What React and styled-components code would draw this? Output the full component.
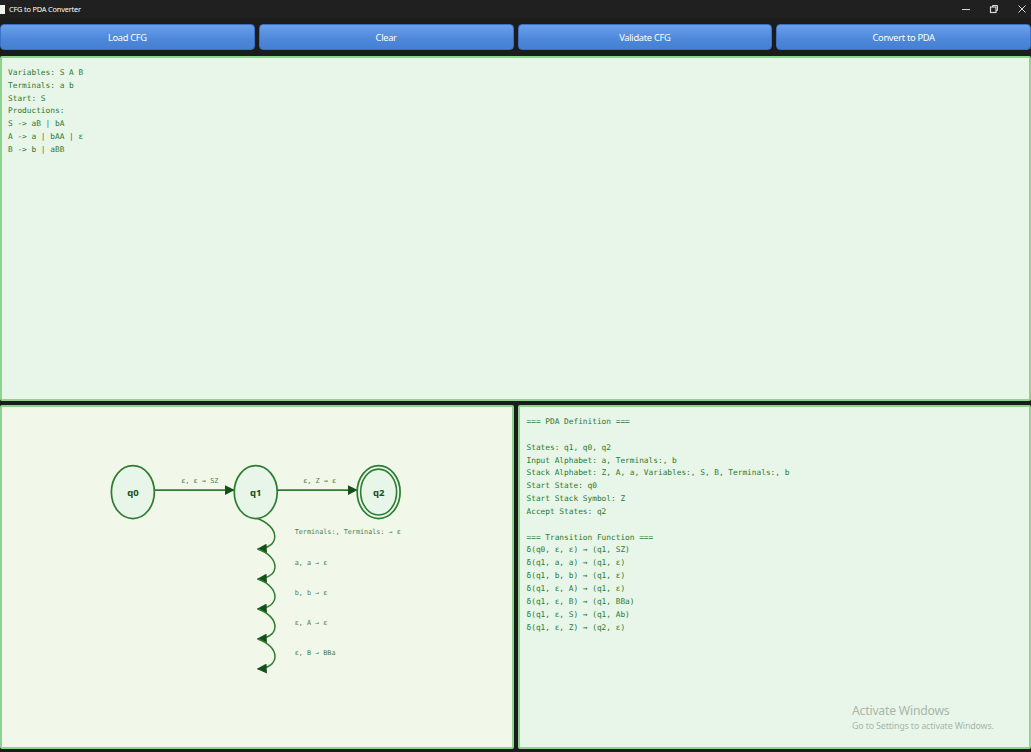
import React from "react";
import styled, { createGlobalStyle } from "styled-components";

const Global = createGlobalStyle`
  html, body { margin: 0; padding: 0; background: #1c1c1c; }
  #root { width: 1031px; height: 752px; overflow: hidden; }
  * { box-sizing: border-box; }
`;

const Window = styled.div`
  position: relative;
  width: 1031px;
  height: 752px;
  display: flex;
  flex-direction: column;
  background: #1c1c1c;
  font-family: "Noto Sans", "Open Sans", sans-serif;
`;

const TitleBar = styled.div`
  height: 18px;
  display: flex;
  align-items: center;
  background: #202020;
  color: #ffffff;
  font-size: 7.4px;
`;

const AppIcon = styled.span`
  width: 5px;
  height: 9px;
  background: #f2f2f2;
  margin-right: 4px;
`;

const TitleText = styled.span`
  flex: 1;
  letter-spacing: -0.2px;
`;

const WinControls = styled.div`
  display: flex;
  align-items: center;
  gap: 10px;
  height: 100%;
`;

const WinBtn = styled.div`
  width: 18px;
  height: 18px;
  display: flex;
  align-items: center;
  justify-content: center;
`;

const Toolbar = styled.div`
  display: grid;
  grid-template-columns: repeat(4, 1fr);
  gap: 4px;
  padding: 6px 0 6px 0;
`;

const Button = styled.button`
  height: 26px;
  border: 1px solid #3c70c0;
  border-radius: 4px;
  background: linear-gradient(#6aa1ec, #4d87da 60%, #4580d3);
  color: #ffffff;
  font-family: "Noto Sans", "Open Sans", sans-serif;
  font-size: 9.3px;
  letter-spacing: -0.3px;
  padding: 0;
`;

const mono = `"DejaVu Sans Mono", "Liberation Mono", monospace`;

const InputArea = styled.div`
  height: 345px;
  background: #e8f5e9;
  border: 2px solid #8ed38e;
  border-radius: 2px;
  padding: 9px 6px;
  font-family: ${mono};
  font-size: 7.8px;
  line-height: 12.8px;
  color: #2a7a2f;
  white-space: pre;
`;

const Bottom = styled.div`
  display: grid;
  grid-template-columns: 1fr 1fr;
  gap: 4px;
  margin-top: 4px;
  height: 344px;
`;

const Panel = styled.div`
  background: ${(p) => p.$bg};
  border: 2px solid #8ed38e;
  border-radius: 2px;
  overflow: hidden;
`;

const OutputText = styled.div`
  padding: 9px 7px;
  font-family: ${mono};
  font-size: 7.8px;
  line-height: 12.85px;
  color: #2a7a2f;
  white-space: pre;
`;

const Diagram = styled.svg`
  display: block;
  width: 100%;
  height: 100%;
`;

const Watermark = styled.div`
  position: absolute;
  left: 852px;
  top: 702px;
  color: #a9b5aa;
  font-family: "Noto Sans", "Open Sans", sans-serif;
  pointer-events: none;
`;

const WmTitle = styled.div`
  font-size: 12.2px;
  line-height: 17px;
  letter-spacing: -0.2px;
`;

const WmSub = styled.div`
  font-size: 8.9px;
  line-height: 14px;
  letter-spacing: -0.15px;
`;

const cfg = `Variables: S A B
Terminals: a b
Start: S
Productions:
S -> aB | bA
A -> a | bAA | ε
B -> b | aBB`;

const pda = `=== PDA Definition ===

States: q1, q0, q2
Input Alphabet: a, Terminals:, b
Stack Alphabet: Z, A, a, Variables:, S, B, Terminals:, b
Start State: q0
Start Stack Symbol: Z
Accept States: q2

=== Transition Function ===
δ(q0, ε, ε) → (q1, SZ)
δ(q1, a, a) → (q1, ε)
δ(q1, b, b) → (q1, ε)
δ(q1, ε, A) → (q1, ε)
δ(q1, ε, B) → (q1, BBa)
δ(q1, ε, S) → (q1, Ab)
δ(q1, ε, Z) → (q2, ε)`;

const G = "#2e7d32";
const DG = "#164f1a";
const LBL = "#4e7f52";

const loops = [
  { y0: 111, y1: 142, label: "Terminals:, Terminals: → ε", ly: 127 },
  { y0: 142, y1: 172, label: "a, a → ε", ly: 158 },
  { y0: 172, y1: 202, label: "b, b → ε", ly: 188 },
  { y0: 202, y1: 232, label: "ε, A → ε", ly: 218 },
  { y0: 232, y1: 262, label: "ε, B → BBa", ly: 248 },
];

function State({ cx, label, accept }) {
  return (
    <g>
      <ellipse cx={cx} cy={85} rx={21.5} ry={26.5} fill="#e8f5e9" stroke={G} strokeWidth="1.7" />
      {accept && <ellipse cx={cx} cy={85} rx={18} ry={23} fill="none" stroke={G} strokeWidth="1.6" />}
      <text x={cx} y={88.5} textAnchor="middle" fontFamily="'Noto Sans', sans-serif" fontWeight="700" fontSize="9.5" fill={DG}>
        {label}
      </text>
    </g>
  );
}

function Graph() {
  return (
    <Diagram viewBox="0 0 510 340">
      <defs>
        <marker id="ah" viewBox="0 0 10 10" refX="9" refY="5" markerWidth="10" markerHeight="10" markerUnits="userSpaceOnUse" orient="auto">
          <path d="M0,0 L10,5 L0,10 z" fill={DG} />
        </marker>
      </defs>
      <line x1="153" y1="83" x2="232" y2="83" stroke={G} strokeWidth="1.6" markerEnd="url(#ah)" />
      <text x="198" y="76" textAnchor="middle" fontFamily="'DejaVu Sans Mono', monospace" fontSize="6.9" fill={LBL}>ε, ε → SZ</text>
      <line x1="275" y1="83" x2="355" y2="83" stroke={G} strokeWidth="1.6" markerEnd="url(#ah)" />
      <text x="318" y="76" textAnchor="middle" fontFamily="'DejaVu Sans Mono', monospace" fontSize="6.9" fill={LBL}>ε, Z → ε</text>
      {loops.map((l, i) => (
        <g key={i}>
          <path
            d={`M${i === 0 ? 254 : 256},${l.y0} C279,${l.y0 + 8} 279,${l.y1 - 1} 256,${l.y1}`}
            fill="none"
            stroke={G}
            strokeWidth="1.5"
            markerEnd="url(#ah)"
          />
          <text x="293" y={l.ly} fontFamily="'DejaVu Sans Mono', monospace" fontSize="6.8" fill={LBL}>{l.label}</text>
        </g>
      ))}
      <State cx={131} label="q0" />
      <State cx={254} label="q1" />
      <State cx={377} label="q2" accept />
    </Diagram>
  );
}

export default function App() {
  return (
    <>
      <Global />
      <Window>
        <TitleBar>
          <AppIcon />
          <TitleText>CFG to PDA Converter</TitleText>
          <WinControls>
            <WinBtn>
              <svg width="10" height="10" viewBox="0 0 10 10"><line x1="1" y1="5.5" x2="9" y2="5.5" stroke="#d8d8d8" strokeWidth="1" /></svg>
            </WinBtn>
            <WinBtn>
              <svg width="10" height="10" viewBox="0 0 10 10">
                <rect x="1.5" y="3" width="5.5" height="5.5" fill="none" stroke="#d8d8d8" strokeWidth="1.2" />
                <path d="M3.5,3 V1.5 H8.5 V6.5 H7" fill="none" stroke="#d8d8d8" strokeWidth="1" />
              </svg>
            </WinBtn>
            <WinBtn>
              <svg width="10" height="10" viewBox="0 0 10 10"><path d="M1.5,1.5 L8.5,8.5 M8.5,1.5 L1.5,8.5" stroke="#d8d8d8" strokeWidth="1" /></svg>
            </WinBtn>
          </WinControls>
        </TitleBar>
        <Toolbar>
          <Button>Load CFG</Button>
          <Button>Clear</Button>
          <Button>Validate CFG</Button>
          <Button>Convert to PDA</Button>
        </Toolbar>
        <InputArea>{cfg}</InputArea>
        <Bottom>
          <Panel $bg="#f1f8e9">
            <Graph />
          </Panel>
          <Panel $bg="#e8f5e9">
            <OutputText>{pda}</OutputText>
          </Panel>
        </Bottom>
        <Watermark>
          <WmTitle>Activate Windows</WmTitle>
          <WmSub>Go to Settings to activate Windows.</WmSub>
        </Watermark>
      </Window>
    </>
  );
}
